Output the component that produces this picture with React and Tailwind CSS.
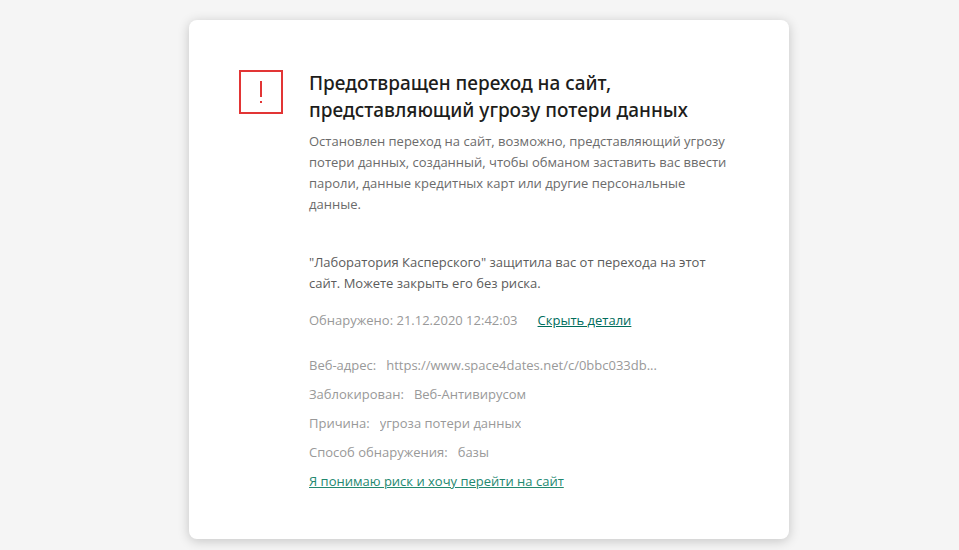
const details = [
  { label: 'Веб-адрес:', value: 'https://www.space4dates.net/c/0bbc033db...' },
  { label: 'Заблокирован:', value: 'Веб-Антивирусом' },
  { label: 'Причина:', value: 'угроза потери данных' },
  { label: 'Способ обнаружения:', value: 'базы' },
]

function WarningIcon() {
  return (
    <svg className="h-11 w-11 flex-shrink-0" viewBox="0 0 44 44" fill="none" aria-hidden="true">
      <rect x="1" y="1" width="42" height="42" stroke="#e23535" strokeWidth="2" />
      <path d="M21 11h2v16h-2zM21 31h2v2h-2z" fill="#e23535" />
    </svg>
  )
}

export default function App() {
  return (
    <div className="min-h-screen bg-[#f5f5f5] pl-[19px] pt-5 pb-[11px] font-['Open_Sans',sans-serif] text-[13px] leading-[21px]">
      <main className="mx-auto flex max-w-[600px] gap-[26px] rounded-lg bg-white px-[50px] pt-[50px] pb-[47px] shadow-[0_2px_12px_rgba(0,0,0,0.2)]">
        <WarningIcon />

        <div className="min-w-0 flex-1">
          <h1 className="font-['Noto_Sans',sans-serif] text-[19px] leading-[27px] font-medium text-[#1d1d1b]">
            Предотвращен переход на сайт, представляющий угрозу потери данных
          </h1>
          <p className="mt-[7px] text-[#6b6b6b]">
            Остановлен переход на сайт, возможно, представляющий угрозу потери данных, созданный, чтобы обманом
            заставить вас ввести пароли, данные кредитных карт или другие персональные данные.
          </p>
          <p className="mt-[37px] text-[#5c5c5c]">
            "Лаборатория Касперского" защитила вас от перехода на этот сайт. Можете закрыть его без риска.
          </p>

          <div className="mt-4 flex gap-5 text-[#999999]">
            <span>Обнаружено: 21.12.2020 12:42:03</span>
            <button type="button" className="cursor-pointer text-[#006d5c] underline">
              Скрыть детали
            </button>
          </div>

          <dl className="mt-6 space-y-2 text-[#999999]">
            {details.map((item) => (
              <div key={item.label} className="flex gap-2.5">
                <dt>{item.label}</dt>
                <dd className="min-w-0 truncate">{item.value}</dd>
              </div>
            ))}
          </dl>
          <a href="#continue" className="mt-2 block w-fit text-[#23886f] underline">
            Я понимаю риск и хочу перейти на сайт
          </a>
        </div>
      </main>
    </div>
  )
}
